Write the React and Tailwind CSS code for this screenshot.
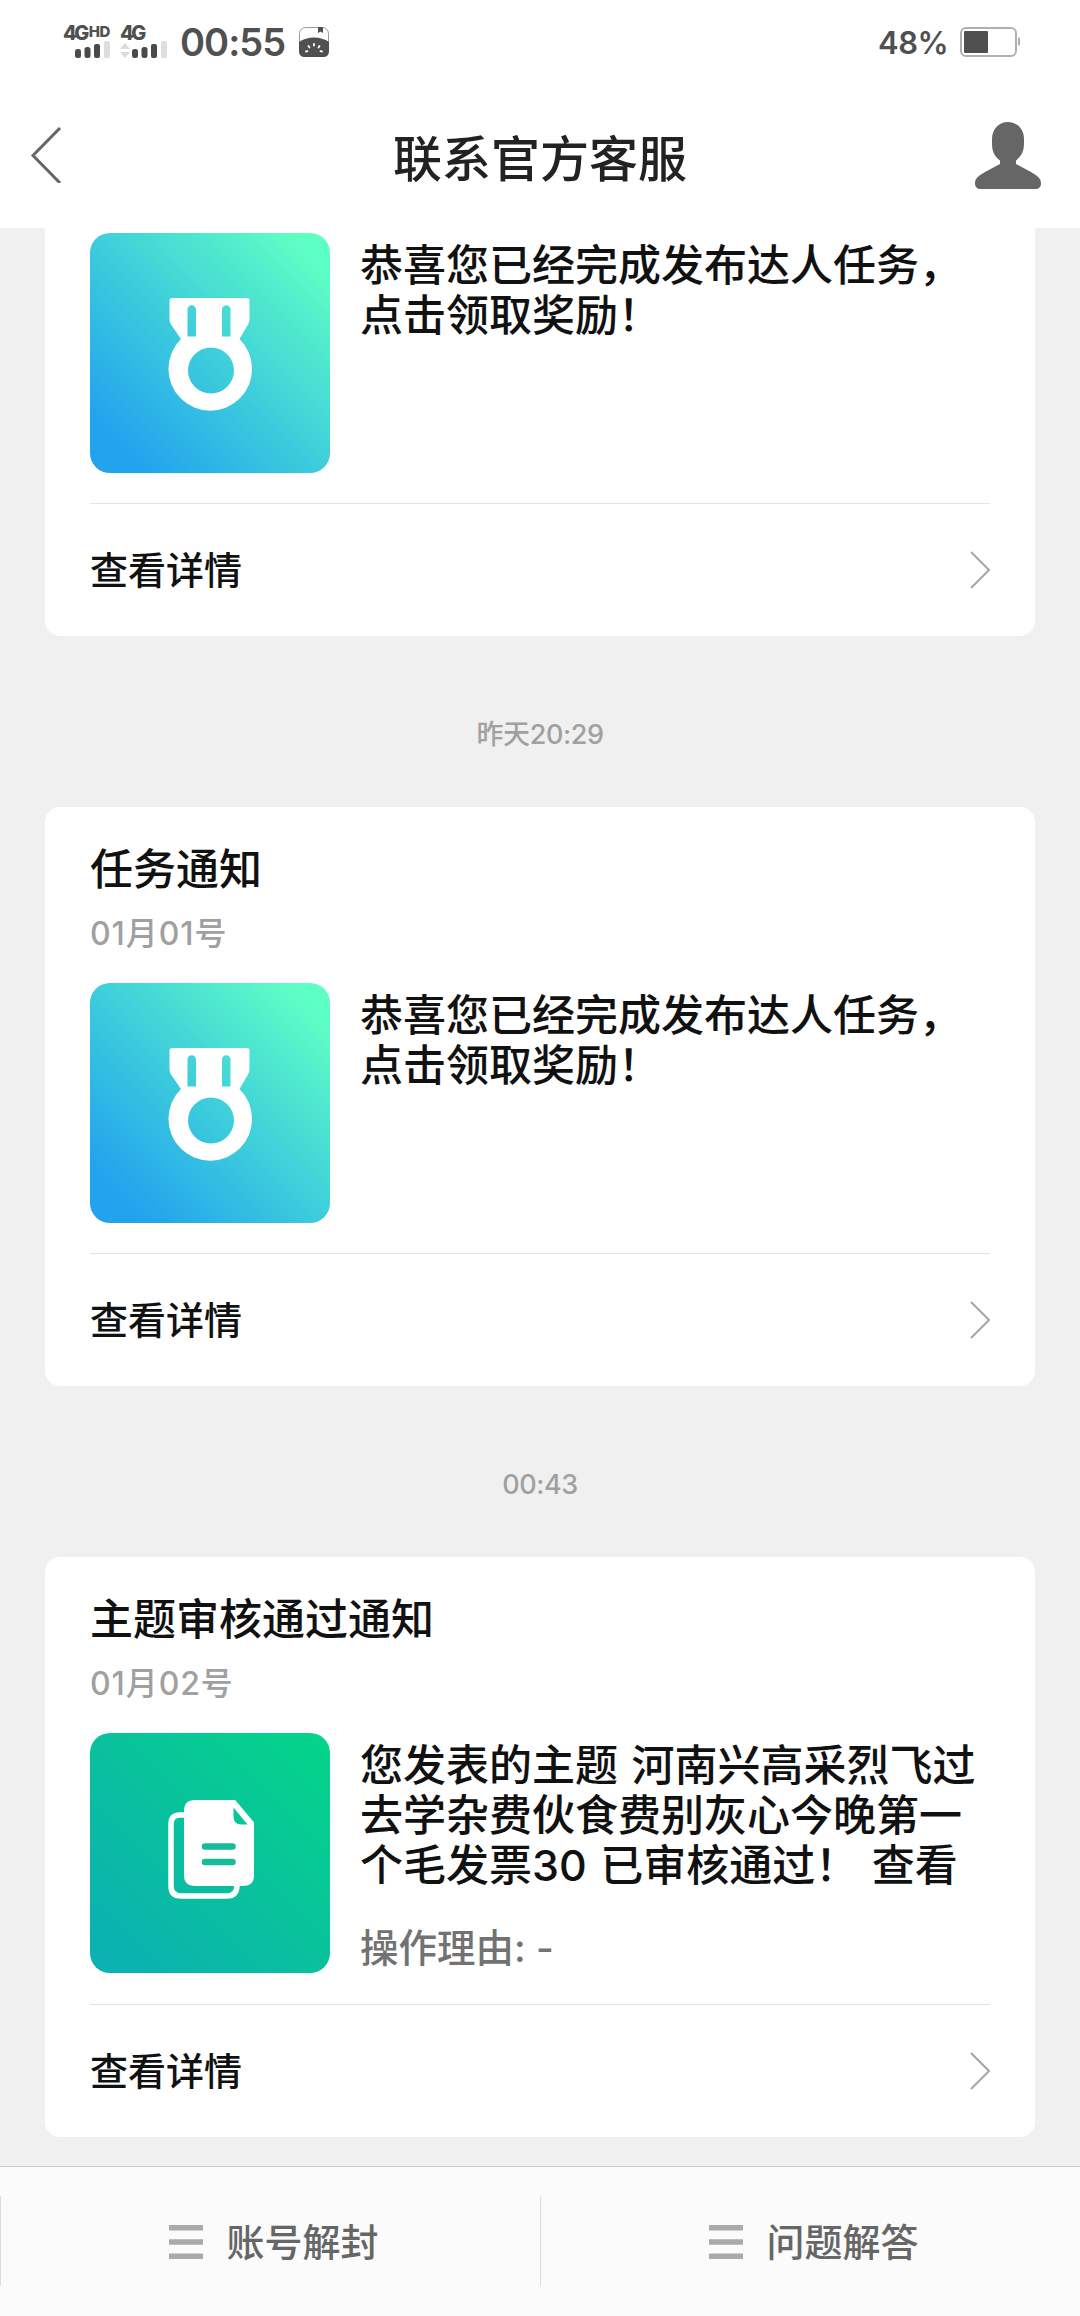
const notices = [
  {
    id: 1,
    kind: 'medal',
    lines: ['恭喜您已经完成发布达人任务，', '点击领取奖励！'],
  },
  {
    id: 2,
    time: '昨天20:29',
    title: '任务通知',
    date: '01月01号',
    kind: 'medal',
    lines: ['恭喜您已经完成发布达人任务，', '点击领取奖励！'],
  },
  {
    id: 3,
    time: '00:43',
    title: '主题审核通过通知',
    date: '01月02号',
    kind: 'document',
    lines: [
      '您发表的主题 河南兴高采烈飞过',
      '去学杂费伙食费别灰心今晚第一',
      '个毛发票30 已审核通过！ 查看',
    ],
    reason: '操作理由: -',
  },
];

const menus = ['账号解封', '问题解答'];

const SignalBars = () => (
  <svg width="35" height="17" viewBox="0 0 35 17">
    <rect x="0" y="8" width="6" height="9" rx="2.5" fill="#4a4a4a" />
    <rect x="9.5" y="6" width="6" height="11" rx="2.5" fill="#4a4a4a" />
    <rect x="19" y="3" width="6" height="14" rx="2" fill="#4a4a4a" />
    <rect x="29" y="0" width="6" height="17" rx="1.5" fill="#dedede" />
  </svg>
);

const StatusBar = () => (
  <div className="flex h-[84px] items-center justify-between pl-[63px] pr-[60px] text-[#505050]">
    <div className="flex items-center">
      <div className="flex w-[47px] flex-col">
        <div className="flex h-[15px] items-start font-extrabold leading-none">
          <span className="text-[20px] leading-[15px] tracking-[-2.5px]">4G</span>
          <span className="ml-[2px] text-[15px] leading-[11px] tracking-[-0.5px]">HD</span>
        </div>
        <div className="pl-3">
          <SignalBars />
        </div>
      </div>
      <div className="ml-[10px] flex w-[48px] flex-col">
        <span className="h-[15px] text-[20px] font-extrabold leading-[15px] tracking-[-2.5px]">4G</span>
        <div className="flex items-end gap-[2px]">
          <svg width="10" height="15" viewBox="0 0 10 15" fill="#dcdcdc">
            <path d="M5 0L10 6H0zM5 15L10 9H0z" />
          </svg>
          <SignalBars />
        </div>
      </div>
      <span className="ml-[12px] w-[107px] whitespace-nowrap text-[38px] font-semibold leading-[40px] tracking-[-1px]">
        00:55
      </span>
      <svg className="ml-[12px]" width="30" height="30" viewBox="0 0 30 30">
        <rect x="0.5" y="0.5" width="29" height="29" rx="6" fill="#fff" stroke="#9a9a9a" />
        <path d="M0 15C8 9 22 9 30 15V24Q30 30 24 30H6Q0 30 0 24Z" fill="#505050" />
        <path d="M19 0h5v6l-2.5-1.500L19 6z" fill="#505050" />
        <path
          d="M15 17v1.500M9.500 19l1 1.500M20.500 19l-1 1.500M7 24.500l1.500-0.300M23 24.500l-1.500-0.300"
          stroke="#fff"
          strokeWidth="1.8"
          strokeLinecap="round"
        />
      </svg>
    </div>
    <div className="flex items-center">
      <span className="w-[70px] whitespace-nowrap pt-[2px] text-[31px] font-semibold leading-[40px] tracking-[-0.5px]">
        48%
      </span>
      <svg className="ml-[12px]" width="60" height="30" viewBox="0 0 60 30">
        <rect x="1" y="1" width="55" height="28" rx="5" fill="#fff" stroke="#b0b0b0" strokeWidth="2" />
        <rect x="4" y="4" width="24" height="22" rx="1" fill="#505050" />
        <path d="M58 10.500h1q1 0 1 1v6q0 1-1 1h-1z" fill="#b0b0b0" />
      </svg>
    </div>
  </div>
);

const Header = () => (
  <div className="flex h-[144px] items-center justify-between pb-[3px] pl-[30px] pr-[38px]">
    <svg width="76" height="56" viewBox="0 0 76 56" fill="none">
      <path d="M30 1L3 28.500L30 56" stroke="#666" strokeWidth="3" />
    </svg>
    <h1 className="pt-[10px] text-[49px] font-medium leading-[60px] text-[#222]">联系官方客服</h1>
    <svg width="68" height="68" viewBox="0 0 68 68" fill="#666">
      <path d="M34 1C43 1 50 8 50 18V23C50 31 46.500 36 42 39.500V43C47 46 52 48 57 51C62 54 67 57 67 62C67 66 65 68 61 68H7C3 68 1 66 1 62C1 57 6 54 11 51C16 48 21 46 26 43V39.500C21 36 18 31 18 23V18C18 8 25 1 34 1Z" />
    </svg>
  </div>
);

const MedalTile = () => (
  <div className="h-[240px] w-[240px] shrink-0 rounded-[20px] bg-[linear-gradient(45deg,#22a3ee_12%,#3fd0da_52%,#5effc4_92%)]">
    <svg width="240" height="240" viewBox="0 0 240 240" fill="none">
      <path
        fill="#fff"
        fillRule="evenodd"
        d="M82 65H157Q159.500 65 159.500 67.500V86Q159.500 89 158 91.500L149.500 106A41.800 41.800 0 1 1 91 106L81 91.500Q79.500 89 79.500 86V67.500Q79.500 65 82 65ZM97.500 76.500V103.500H106V76.500A4.250 4.250 0 0 0 97.500 76.500ZM132 76.500V103.500H140.500V76.500A4.250 4.250 0 0 0 132 76.500ZM121 114.500A23 23 0 1 0 121 160.500A23 23 0 1 0 121 114.500Z"
      />
    </svg>
  </div>
);

const DocumentTile = () => (
  <div className="h-[240px] w-[240px] shrink-0 rounded-[20px] bg-[linear-gradient(45deg,#0bb1b3_5%,#09bf9f_45%,#04d38a_95%)]">
    <svg width="240" height="240" viewBox="0 0 240 240" fill="none">
      <path
        d="M94 82H90Q81 82 81 91V153Q81 163 91 163H137Q147 163 147 152"
        stroke="#fff"
        strokeWidth="5.5"
      />
      <path
        fill="#fff"
        fillRule="evenodd"
        d="M105 67H144L164 90V142Q164 153 153 153H105Q94 153 94 142V78Q94 67 105 67ZM143.500 74.500V83Q143.500 91.500 151 91.500H157.500Z"
      />
      <path d="M115 113.500H142.500M115 129H142.500" stroke="#14bd99" strokeWidth="6.500" strokeLinecap="round" />
      <path d="M144.500 68.500L162.500 90" stroke="#fff" strokeWidth="3" strokeLinecap="round" />
    </svg>
  </div>
);

const NoticeCard = ({ notice }) => (
  <div
    className={
      notice.title
        ? 'rounded-[15px] bg-white px-[45px] pt-[32px]'
        : 'rounded-b-[15px] bg-white px-[45px] pt-[5px]'
    }
  >
    {notice.title && (
      <div className="h-[144px]">
        <h2 className="text-[43px] font-medium leading-[60px] text-[#111]">{notice.title}</h2>
        <p className="pt-[11px] text-[32px] font-medium leading-[48px] tracking-[0.9px] text-[#a0a0a0]">
          {notice.date}
        </p>
      </div>
    )}
    <div className="flex gap-[30px]">
      {notice.kind === 'medal' ? <MedalTile /> : <DocumentTile />}
      <div className="pt-[7px]">
        {notice.lines.map((line) => (
          <p
            key={line}
            className="whitespace-pre text-[43px] font-medium leading-[50px] text-[#111] [word-spacing:2px]"
          >
            {line}
          </p>
        ))}
        {notice.reason && (
          <p className="pt-[32px] text-[38.5px] font-medium leading-[52px] text-[#727272]">{notice.reason}</p>
        )}
      </div>
    </div>
    <div className="mt-[30px] flex h-[133px] items-center justify-between border-t border-[#e3e3e3]">
      <span className="text-[38px] font-medium leading-[50px] text-[#111]">查看详情</span>
      <svg width="20" height="38" viewBox="0 0 20 38" fill="none">
        <path d="M1 1L19 19L1 37" stroke="#a6a6a6" strokeWidth="2" />
      </svg>
    </div>
  </div>
);

const MenuIcon = () => (
  <svg width="34" height="34" viewBox="0 0 34 34" fill="#aaa">
    <rect y="0" width="34" height="5.500" />
    <rect y="14.250" width="34" height="5.500" />
    <rect y="28.500" width="34" height="5.500" />
  </svg>
);

const App = () => {
  return (
    <div className="flex h-[2316px] w-[1080px] flex-col overflow-hidden bg-[#f0f0f0] font-[Inter,'Noto_Sans_CJK_SC',sans-serif]">
      <div className="bg-white">
        <StatusBar />
        <Header />
      </div>

      {/* Message list */}
      <div className="flex-1 px-[45px]">
        {notices.map((notice) => (
          <div key={notice.id}>
            {notice.time && (
              <div className="flex h-[171px] justify-center pt-[79px] text-[27px] font-medium leading-[40px] tracking-[-0.4px] text-[#a0a0a0]">
                {notice.time}
              </div>
            )}
            <NoticeCard notice={notice} />
          </div>
        ))}
      </div>

      {/* Bottom menu */}
      <div className="flex h-[150px] border-t border-[#ccc] bg-[#fbfbfb] pb-[30px] pt-[29px]">
        {menus.map((label) => (
          <div
            key={label}
            className="flex flex-1 items-center justify-center gap-[23px] border-l border-[#ddd] pl-[7px] pt-[2px]"
          >
            <MenuIcon />
            <span className="text-[38px] font-medium leading-[50px] text-[#666]">{label}</span>
          </div>
        ))}
      </div>
    </div>
  );
};

export default App;
